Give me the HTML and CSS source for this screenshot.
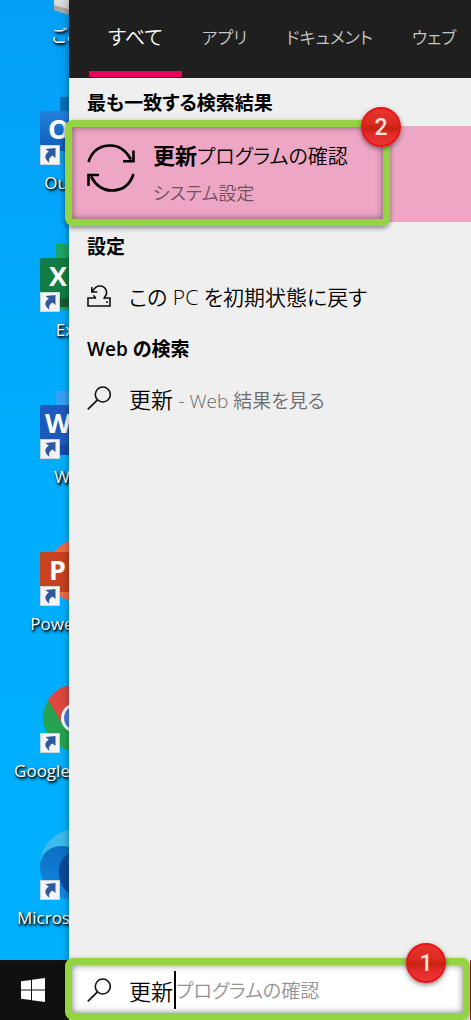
FILE: index.html
```html
<!DOCTYPE html>
<html lang="ja">
<head>
<meta charset="utf-8">
<meta name="viewport" content="width=device-width, initial-scale=1">
<title>更新プログラムの確認</title>
<link rel="stylesheet" href="styles.css">
</head>
<body>
<svg class="defs" aria-hidden="true">
  <defs>
    <symbol id="shortcut" viewBox="0 0 20 20">
      <rect x=".5" y=".5" width="19" height="19" fill="#f4f4f4" stroke="#c9d3da"/>
      <path d="M5.500 4 15.500 3v10l-3-2.500c-3.500 2.300-4 4.500-2.800 7.500C4.200 14.500 4 9.500 8.800 6.800z" fill="#2f589f"/>
    </symbol>
    <symbol id="lens" viewBox="0 0 24 24">
      <circle cx="15.800" cy="8.500" r="7.500" fill="none" stroke="#111" stroke-width="1.600"/>
      <path d="M10.500 13.800.8 23.400" fill="none" stroke="#111" stroke-width="1.700"/>
    </symbol>
    <linearGradient id="blue" x2="0" y2="1"><stop stop-color="#2480dc"/><stop offset="1" stop-color="#0f5cb8"/></linearGradient>
    <linearGradient id="edge" x2="0" y2="1"><stop stop-color="#0b6fc4"/><stop offset="1" stop-color="#1389e2"/></linearGradient>
  </defs>
</svg>

<main class="screen">
  <section class="desktop">
    <div class="shortcut">
      <svg class="shortcut-icon" viewBox="0 0 72 72"><path d="M14 0h46l-5 70-12 2-29-9z" fill="#d9dadb"/><path d="m14 58 29 8v6l-29-9z" fill="#aaa6a2"/></svg>
      <span class="shortcut-name">ごみ箱</span>
    </div>
    <div class="shortcut">
      <svg class="shortcut-icon" viewBox="0 0 72 72"><path d="M20 3h52v66H20z" fill="#0870bd"/><path d="M20 54h52v15H20z" fill="#179ddd"/><rect y="17" width="40" height="40" rx="2" fill="url(#blue)"/><text class="app-letter" x="8" y="45">O</text><use href="#shortcut" y="51" width="20" height="20"/></svg>
      <span class="shortcut-name">Outlook</span>
    </div>
    <div class="shortcut">
      <svg class="shortcut-icon" viewBox="0 0 72 72"><path d="M16 3h56v66H16z" fill="#1ba566"/><path d="M16 50h56v16H16z" fill="#185c37"/><rect y="17" width="40" height="40" rx="2" fill="#127c43"/><text class="app-letter" x="9" y="45">X</text><use href="#shortcut" y="51" width="20" height="20"/></svg>
      <span class="shortcut-name">Excel</span>
    </div>
    <div class="shortcut">
      <svg class="shortcut-icon" viewBox="0 0 72 72"><path d="M16 3h56v20H16z" fill="#38a0f5"/><path d="M16 23h56v44H16z" fill="#174ba8"/><rect y="17" width="40" height="40" rx="2" fill="#1e5abe"/><text class="app-letter" x="5" y="45">W</text><use href="#shortcut" y="51" width="20" height="20"/></svg>
      <span class="shortcut-name">Word</span>
    </div>
    <div class="shortcut">
      <svg class="shortcut-icon" viewBox="0 0 72 72"><circle cx="40" cy="36" r="32" fill="#ed6c47"/><rect y="17" width="40" height="40" rx="2" fill="#c9421f"/><text class="app-letter" x="9" y="45">P</text><use href="#shortcut" y="51" width="20" height="20"/></svg>
      <span class="shortcut-name">PowerPoint</span>
    </div>
    <div class="shortcut">
      <svg class="shortcut-icon" viewBox="0 0 72 72"><circle cx="36" cy="36" r="33" fill="#26a350"/><path d="M8 18a33 33 0 0 1 61 16H36L23 43z" fill="#dd4840"/><circle cx="36" cy="36" r="15" fill="#fff"/><circle cx="36" cy="36" r="12" fill="#4d7de0"/><use href="#shortcut" y="51" width="20" height="20"/></svg>
      <span class="shortcut-name">Google Chrome</span>
    </div>
    <div class="shortcut">
      <svg class="shortcut-icon" viewBox="0 0 72 72"><circle cx="36" cy="36" r="36" fill="#3cbcec"/><path d="M0 34C3 22 12 17 22 17c12 0 22 8 26 20l-4 34C20 76-2 58 0 34z" fill="url(#edge)"/><path d="M30 24C18 30 16 45 22 56c5 9 13 14 22 15 10-1 19-8 23-17-20 6-38-4-39-22z" fill="#0b4a9d"/><use href="#shortcut" y="51" width="20" height="20"/></svg>
      <span class="shortcut-name">Microsoft Edge</span>
    </div>
  </section>

  <section class="panel">
    <nav class="tabs">
      <button class="tab tab-active" type="button">すべて</button>
      <button class="tab" type="button">アプリ</button>
      <button class="tab" type="button">ドキュメント</button>
      <button class="tab" type="button">ウェブ</button>
    </nav>

    <h2 class="group-title">最も一致する検索結果</h2>
    <div class="best">
      <a class="best-link" href="#update">
        <svg class="sync" viewBox="0 0 48 48" fill="none" stroke="#000" stroke-width="2.600"><path d="M1.500 18C5 7 13 1.500 23.500 1.500c9 0 15.500 5 20.500 14M46.500 6.500v10.800H36M46.500 30C43 41 35 46.500 24.500 46.500c-9 0-15.500-5-20.500-14M1.500 42V31H12"/></svg>
        <span class="best-text">
          <span class="best-name"><b class="typed">更新</b>プログラムの確認</span>
          <span class="best-kind">システム設定</span>
        </span>
      </a>
      <div class="frame frame-best"></div>
      <span class="badge badge-best">2</span>
    </div>

    <h2 class="group-title">設定</h2>
    <a class="result" href="#reset">
      <svg class="result-icon" viewBox="0 0 24 24" fill="none" stroke="#111" stroke-width="1.600"><path d="M9 14H1v8h22v-8h-6"/><path d="M4.800 3v5h5.500M5.500 7.500C7.500 3.500 10 2 13 2a6.500 6.500 0 0 1 4.500 11.200L17 15M9 14c-1.200-.7-2-1.600-2.500-2.800"/><path d="M19 18h2"/></svg>
      <span>この PC を初期状態に戻す</span>
    </a>

    <h2 class="group-title">Web の検索</h2>
    <a class="result" href="#web">
      <svg class="result-icon"><use href="#lens"/></svg>
      <span><span class="typed">更新</span> <small class="hint">- Web 結果を見る</small></span>
    </a>
  </section>

  <footer class="taskbar">
    <button class="start" type="button" aria-label="スタート">
      <svg class="start-icon" viewBox="0 0 24 24" fill="#fff"><path d="M0 3.300 10 2v9.500H0zM11 1.800 24 0v11.500H11zM0 12.500h10V22L0 20.700zM11 12.500h13V24l-13-1.800z"/></svg>
    </button>
    <div class="search">
      <svg class="result-icon"><use href="#lens"/></svg>
      <label class="query">
        <input class="query-input typed" type="text" value="更新" aria-label="検索">
        <span class="caret"></span>
        <span class="completion">プログラムの確認</span>
      </label>
      <div class="frame frame-search"></div>
      <span class="badge badge-search">1</span>
    </div>
  </footer>
</main>
</body>
</html>
```

FILE: styles.css
```css
* {
  box-sizing: border-box;
}

body {
  margin: 0;
  font-family: "Open Sans", "Noto Sans CJK JP", sans-serif;
  font-feature-settings: "palt";
  color: #000;
}

button,
input {
  margin: 0;
  padding: 0;
  border: 0;
  background: none;
  color: inherit;
  font: inherit;
  font-feature-settings: inherit;
}

a {
  color: inherit;
  text-decoration: none;
}

.defs {
  position: absolute;
  width: 0;
  height: 0;
}

.screen {
  display: grid;
  grid-template-columns: 69px minmax(0, 1fr);
  grid-template-rows: minmax(0, 1fr) 60px;
  height: 100vh;
  overflow: hidden;
}

/* Desktop */
.desktop {
  display: flex;
  flex-direction: column;
  justify-content: flex-end;
  overflow: hidden;
  background: linear-gradient(#049ef7, #00adfd 45%, #00b0fd);
}

.shortcut {
  display: flex;
  flex: none;
  flex-direction: column;
  align-items: center;
  gap: 5px;
  width: 152px;
  height: 147px;
  padding-top: 16px;
}

.shortcut-icon {
  flex: none;
  width: 72px;
  height: 72px;
}

.app-letter {
  fill: #fff;
  font-size: 27px;
  font-weight: 700;
}

.shortcut-name {
  color: #fff;
  font-size: 17px;
  line-height: 24px;
  white-space: nowrap;
  text-shadow: 1px 1px 2px #000, 1px 2px 3px #000;
}

/* Search panel */
.panel {
  position: relative;
  z-index: 1;
  background: #efefef;
  box-shadow: 0 0 8px rgba(0, 0, 0, 0.4);
}

.tabs {
  display: flex;
  gap: 1px;
  height: 78px;
  padding: 0 0 1px 20px;
  background: #1f1f1f;
}

.tab {
  padding: 2px 19px 0;
  border-bottom: 6px solid transparent;
  color: #c8c8c8;
  font-size: 17px;
  font-weight: 350;
  white-space: nowrap;
}

.tab-active {
  border-color: #ea005e;
  color: #fff;
  font-size: 20px;
}

.group-title {
  margin: 0;
  padding: 0 18px;
  font-size: 19px;
  font-weight: 600;
  line-height: 50px;
}

.tabs + .group-title {
  margin-bottom: -2px;
}

.best {
  position: relative;
}

.best-link {
  display: flex;
  align-items: flex-start;
  gap: 18px;
  height: 96px;
  padding: 18px 18px 0;
  background: #eda7c4;
}

.sync {
  flex: none;
  width: 48px;
  height: 48px;
}

.best-text {
  display: flex;
  flex-direction: column;
  margin-top: -7px;
}

.best-name {
  font-size: 20px;
  font-weight: 350;
  line-height: 36px;
}

.typed {
  font-size: 22px;
}

b.typed {
  font-weight: 700;
}

.best-kind {
  color: #71505e;
  font-size: 18px;
  font-weight: 350;
  line-height: 36px;
}

.result {
  display: flex;
  align-items: center;
  gap: 18px;
  height: 52px;
  padding: 0 18px 4px;
  font-size: 21px;
  font-weight: 350;
}

.result-icon {
  flex: none;
  width: 24px;
  height: 24px;
}

.hint {
  color: #6c6c6c;
  font-size: 19px;
}

/* Numbered callouts */
.frame {
  position: absolute;
  border: 7px solid #92d540;
  border-radius: 8px;
  box-shadow: 0 2px 5px rgba(0, 0, 0, 0.45), inset 0 0 7px rgba(0, 0, 0, 0.5);
  pointer-events: none;
}

.frame-best {
  top: -6px;
  bottom: -4px;
  left: -4px;
  width: 325px;
}

.frame-search {
  top: -2px;
  right: 0;
  bottom: 0;
  left: -4px;
}

.badge {
  position: absolute;
  display: grid;
  place-items: center;
  width: 40px;
  height: 40px;
  border: 2px solid #e81518;
  border-radius: 50%;
  background: linear-gradient(#e6352f, #dc2a20 40%, #c42310 55%, #e42b2b 70%, #ea3535);
  box-shadow: 0 2px 5px rgba(0, 0, 0, 0.45);
  color: #ffe3dc;
  font-family: Roboto, sans-serif;
  font-size: 23px;
  font-weight: 500;
}

.badge-best {
  top: -19px;
  left: 292px;
}

.badge-search {
  top: -17px;
  right: 24px;
}

/* Taskbar */
.taskbar {
  position: relative;
  z-index: 2;
  display: flex;
  grid-column: 1 / -1;
  background: #101010;
}

.start {
  display: grid;
  place-items: center;
  width: 69px;
  padding-right: 3px;
}

.start-icon {
  width: 24px;
  height: 24px;
}

.search {
  position: relative;
  display: flex;
  flex: 1;
  align-items: center;
  gap: 18px;
  padding: 0 18px;
  border-right: 1px solid #c4004f;
  background: #fff;
}

.query {
  display: flex;
  align-items: center;
  font-size: 20px;
  font-weight: 350;
}

.query-input {
  width: 45px;
  outline: 0;
}

.caret {
  width: 2px;
  height: 38px;
  background: #000;
}

.completion {
  color: #929292;
  font-size: 19px;
  white-space: nowrap;
}
```
